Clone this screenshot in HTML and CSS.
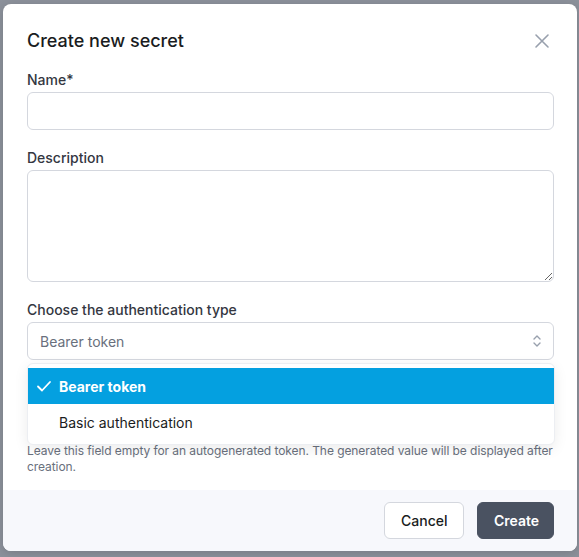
FILE: index.html
```html
<!DOCTYPE html>
<html>
<head>
<meta charset="utf-8">
<link rel="stylesheet" href="styles.css">
</head>
<body>
<div class="overlay">
  <div class="modal">
    <div class="modal-body">
      <div class="header">
        <h1 class="title">Create new secret</h1>
        <button class="close" aria-label="Close">
          <svg width="16" height="16" viewBox="0 0 16 16"><path d="M2 2 L14 14 M14 2 L2 14" stroke="#98a0ad" stroke-width="1.6" stroke-linecap="round" fill="none"/></svg>
        </button>
      </div>
      <div class="field first">
        <label class="label">Name*</label>
        <input class="input" type="text">
      </div>
      <div class="field">
        <label class="label">Description</label>
        <textarea class="textarea"></textarea>
      </div>
      <div class="field">
        <label class="label">Choose the authentication type</label>
        <div class="select-wrap">
          <div class="select">
            <span class="select-value">Bearer token</span>
            <svg class="chev" width="10" height="16" viewBox="0 0 10 16"><path d="M2 6 L5 3 L8 6 M2 10 L5 13 L8 10" stroke="#98a0ad" stroke-width="1.4" stroke-linecap="round" stroke-linejoin="round" fill="none"/></svg>
          </div>
          <ul class="menu">
            <li class="option selected">
              <svg class="check" width="16" height="16" viewBox="0 0 16 16"><path d="M2 8.5 L6 12.5 L14 4" stroke="#ffffff" stroke-width="1.8" stroke-linecap="round" stroke-linejoin="round" fill="none"/></svg>
              <span>Bearer token</span>
            </li>
            <li class="option"><span>Basic authentication</span></li>
          </ul>
        </div>
      </div>
      <div class="field">
        <div class="token-field">
          <input class="input" type="text" aria-label="Token">
        </div>
        <p class="help">Leave this field empty for an autogenerated token. The generated value will be displayed after creation.</p>
      </div>
    </div>
    <div class="footer">
      <button class="btn btn-secondary">Cancel</button>
      <button class="btn btn-primary">Create</button>
    </div>
  </div>
</div>
</body>
</html>
```

FILE: styles.css
```css
* { box-sizing: border-box; }
html, body {
  margin: 0;
  padding: 0;
  height: 100%;
  background: #8c919b;
  font-family: Inter, "Noto Sans", "Liberation Sans", sans-serif;
  overflow: hidden;
}
.overlay {
  padding: 4px 2px 0 3px;
}
.modal {
  width: 574px;
  height: 547px;
  background: #ffffff;
  border-radius: 8px;
  overflow: hidden;
  display: flex;
  flex-direction: column;
  box-shadow: 0 2px 10px rgba(0,0,0,0.15);
}
.modal-body {
  flex: 1;
  padding: 25px 23px 0 24px;
}
.header {
  display: flex;
  justify-content: space-between;
  align-items: center;
  height: 24px;
}
.title {
  margin: 0;
  font-size: 18px;
  line-height: 24px;
  font-weight: 500;
  color: #1a1c21;
}
.close {
  border: 0;
  background: none;
  padding: 0;
  width: 16px;
  height: 16px;
  margin-right: 4px;
  display: flex;
}
.field {
  display: flex;
  flex-direction: column;
  margin-top: 18px;
}
.field.first { margin-top: 17px; }
.label {
  font-size: 14px;
  line-height: 20px;
  font-weight: 500;
  color: #343741;
  margin-bottom: 2px;
}
.token-field {
  padding-top: 22px;
}
.input, .textarea, .select {
  width: 100%;
  border: 1px solid #d4d7de;
  border-radius: 6px;
  background: #fff;
  font-family: inherit;
  font-size: 14px;
}
.input { height: 38px; }
.textarea {
  height: 112px;
  resize: vertical;
  display: block;
}
.select-wrap { position: relative; }
.select {
  height: 38px;
  display: flex;
  align-items: center;
  justify-content: space-between;
  padding: 0 12px 0 12px;
}
.select-value { color: #69707d; font-size: 14px; }
.chev { margin-right: -1px; }
.menu {
  position: absolute;
  left: 0;
  right: -1px;
  top: 41px;
  margin: 0;
  padding: 4px 0;
  list-style: none;
  background: #fff;
  border: 1px solid #eceef2;
  border-radius: 6px;
  box-shadow: 0 4px 14px rgba(0,0,0,0.08);
  z-index: 2;
}
.option {
  height: 36px;
  display: flex;
  align-items: center;
  padding-left: 31px;
  font-size: 14px;
  color: #1a1c21;
}
.option.selected {
  background: #04a0e0;
  color: #fff;
  font-weight: 700;
  padding-left: 8px;
}
.check { margin-right: 7px; }
.help {
  margin: 5px 0 0 0;
  font-size: 12px;
  line-height: 15.5px;
  color: #69707d;
  letter-spacing: -0.07px;
}
.footer {
  height: 61px;
  background: #f7f8fc;
  display: flex;
  justify-content: flex-end;
  align-items: center;
  gap: 13px;
  padding: 0 23px 0 24px;
}
.btn {
  height: 37px;
  border-radius: 6px;
  font-family: inherit;
  font-size: 14px;
  font-weight: 500;
  padding: 0 16px;
}
.btn-secondary {
  background: #fff;
  border: 1px solid #d4d7de;
  color: #1a1c21;
  width: 80px;
}
.btn-primary {
  background: #4a5261;
  border: 1px solid #4a5261;
  color: #fff;
  font-weight: 600;
  width: 77px;
}
```
